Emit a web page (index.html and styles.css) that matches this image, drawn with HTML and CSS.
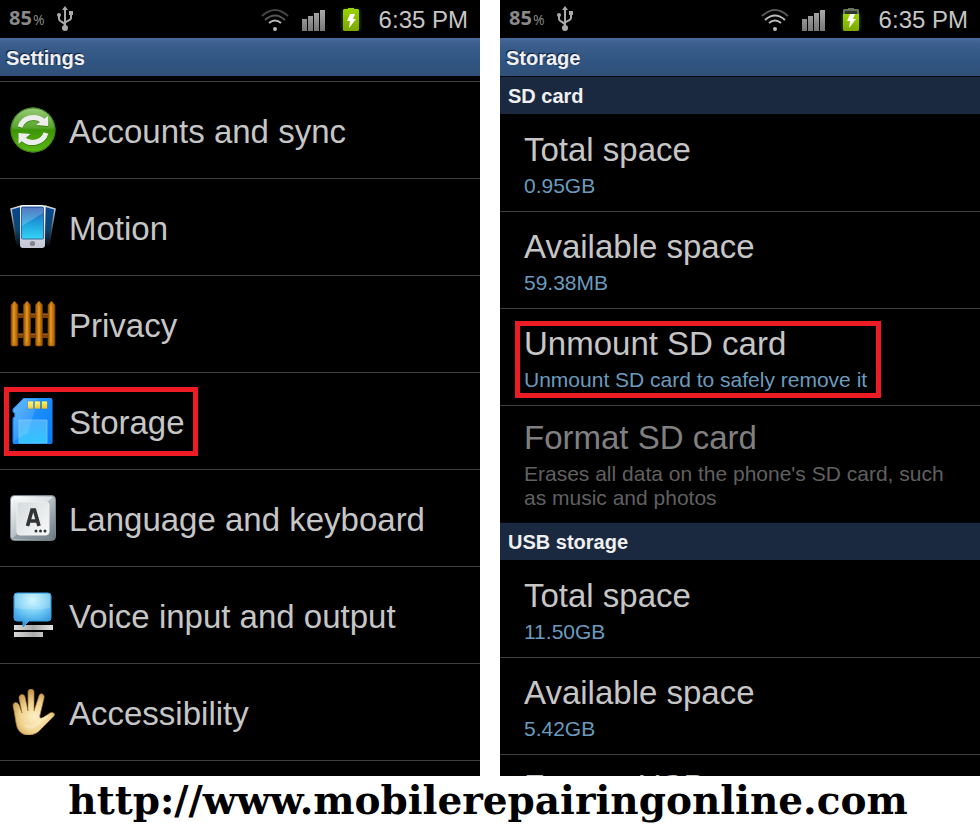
FILE: index.html
```html
<!DOCTYPE html>
<html lang="en">
<head>
<meta charset="utf-8">
<title>Settings and storage</title>
<link rel="stylesheet" href="styles.css">
</head>
<body>
<svg class="defs" aria-hidden="true">
  <defs>
    <linearGradient id="green" x1="0" y1="0" x2="0" y2="1"><stop offset="0" stop-color="#9ccb7c"/><stop offset=".45" stop-color="#57a52a"/><stop offset=".5" stop-color="#3c9405"/><stop offset="1" stop-color="#5cba14"/></linearGradient>
    <linearGradient id="screen" x1="0" y1="0" x2="0" y2="1"><stop offset="0" stop-color="#2d55b4"/><stop offset=".5" stop-color="#1c9fdc"/><stop offset="1" stop-color="#35d4f6"/></linearGradient>
    <linearGradient id="back" x1="0" y1="0" x2="0" y2="1"><stop offset="0" stop-color="#0a4690"/><stop offset=".6" stop-color="#084672"/><stop offset="1" stop-color="#05101c"/></linearGradient>
    <linearGradient id="rim" x1="0" y1="0" x2="0" y2="1"><stop offset="0" stop-color="#d8dce2"/><stop offset=".6" stop-color="#4a4d52"/><stop offset="1" stop-color="#08090a"/></linearGradient>
    <linearGradient id="shell" x1="0" y1="0" x2="0" y2="1"><stop offset="0" stop-color="#fff"/><stop offset="1" stop-color="#c3c6d4"/></linearGradient>
    <linearGradient id="wood" x1="0" y1="0" x2="1" y2="0"><stop offset="0" stop-color="#995000"/><stop offset=".4" stop-color="#d58a13"/><stop offset=".8" stop-color="#b96a04"/><stop offset="1" stop-color="#7b3d00"/></linearGradient>
    <linearGradient id="card" x1="0" y1="0" x2="1" y2="1"><stop offset="0" stop-color="#55b4ff"/><stop offset=".5" stop-color="#188cff"/><stop offset="1" stop-color="#0879f8"/></linearGradient>
    <linearGradient id="label" x1="0" y1="0" x2="0" y2="1"><stop offset="0" stop-color="#4db0ff"/><stop offset="1" stop-color="#30c5ff"/></linearGradient>
    <linearGradient id="gold" x1="0" y1="0" x2="0" y2="1"><stop offset="0" stop-color="#fff27c"/><stop offset=".5" stop-color="#ffe03c"/><stop offset="1" stop-color="#f5b92c"/></linearGradient>
    <linearGradient id="key" x1="0" y1="0" x2="1" y2="1"><stop offset="0" stop-color="#fff"/><stop offset=".5" stop-color="#b5bfc4"/><stop offset="1" stop-color="#65747c"/></linearGradient>
    <linearGradient id="keytop" x1="0" y1="0" x2="1" y2="1"><stop offset="0" stop-color="#d5dadc"/><stop offset="1" stop-color="#f8fafb"/></linearGradient>
    <radialGradient id="bubble" cx=".5" cy=".2" r=".8"><stop offset="0" stop-color="#c4f5ff"/><stop offset=".5" stop-color="#72ccf4"/><stop offset="1" stop-color="#2c91de"/></radialGradient>
    <linearGradient id="bar" x1="0" y1="0" x2="1" y2="0"><stop offset="0" stop-color="#d9d9d9"/><stop offset=".5" stop-color="#aaa"/><stop offset="1" stop-color="#e2e2e2"/></linearGradient>
    <radialGradient id="palm" gradientUnits="userSpaceOnUse" cx="25" cy="28" r="30"><stop offset="0" stop-color="#fff0c6"/><stop offset=".5" stop-color="#efd390"/><stop offset="1" stop-color="#bb8637"/></radialGradient>
    <linearGradient id="battery" x1="0" y1="0" x2="0" y2="1"><stop offset="0" stop-color="#9bd500"/><stop offset="1" stop-color="#7aa600"/></linearGradient>
    <linearGradient id="signal" x1="0" y1="0" x2="0" y2="1"><stop offset="0" stop-color="#aaa"/><stop offset="1" stop-color="#777"/></linearGradient>
    <filter id="glow" x="-50%" y="-50%" width="200%" height="200%"><feGaussianBlur stdDeviation="2"/></filter>
  </defs>
  <symbol id="usb" viewBox="0 0 18 26">
    <path d="M9 4v17M3 10v3c0 3 6 3 6 6M15 9v3c0 3-6 3-6 5" fill="none" stroke="#aaa" stroke-width="2"/>
    <path d="M9 0l3 4H6z" fill="#aaa"/><circle cx="3" cy="9" r="2" fill="#aaa"/><path d="M13 5h4v4h-4z" fill="#aaa"/><circle cx="9" cy="22" r="3" fill="#aaa"/>
  </symbol>
  <symbol id="bars" viewBox="0 0 24 24">
    <path d="M0 12h5v12H0zM6 9h5v15H6zM12 6h5v18h-5zM18 3h5v21h-5z" fill="url(#signal)"/>
  </symbol>
  <symbol id="arrows" viewBox="0 0 46 46">
    <path d="M10 20A14 13 0 0 1 33 14M36 26A14 13 0 0 1 13 32" fill="none" stroke="currentColor" stroke-width="5"/>
    <path d="M38 9v10l-12-1zM8.500 37V26l12 1z" fill="currentColor"/>
  </symbol>
</svg>

<main class="screens">
  <section class="phone" aria-label="Settings screen">
    <div class="status">
      <span class="level">85<small>%</small></span>
      <svg class="usb" aria-hidden="true"><use href="#usb"/></svg>
      <span class="spacer"></span>
      <svg class="wifi" viewBox="0 0 30 24" aria-hidden="true"><g fill="none" stroke-width="2"><path d="M2 9q13-12 26 0" stroke="#444"/><path d="M5 13q10-9 20 0" stroke="#555"/><path d="M9 16q6-5 12 0" stroke="#bbb"/></g><circle cx="15" cy="22" r="2" fill="#bbb"/></svg>
      <svg class="bars" aria-hidden="true"><use href="#bars"/></svg>
      <svg class="battery" viewBox="0 0 29 24" aria-hidden="true"><path d="M5 3h16v20H5z" fill="#6a9800" filter="url(#glow)" opacity=".7"/><path d="M6 2h4V1h6v1h4l1 1v20l-1 1H6l-1-1V3z" fill="url(#battery)"/><path d="M12 7h5l-2 5h3l-7 9 1-7H9z" fill="#fff"/></svg>
      <time class="clock">6:35 PM</time>
    </div>
    <h1 class="title">Settings</h1>
    <nav class="menu">
      <a class="item" href="#accounts"><span class="entry">
        <svg class="icon" viewBox="0 0 46 46" aria-hidden="true"><circle cx="23" cy="23" r="22.500" fill="url(#green)"/><circle cx="23" cy="23" r="22" fill="none" stroke="#3c7d18"/><use class="arrow-shade" href="#arrows" y="1"/><use class="arrow" href="#arrows"/></svg>
        <span class="name">Accounts and sync</span></span></a>
      <a class="item" href="#motion"><span class="entry">
        <svg class="icon" viewBox="0 0 46 46" aria-hidden="true"><path d="M1 5l10-3v38l-4 1z" fill="url(#back)" stroke="url(#rim)" stroke-width="1.500"/><path d="M45 5L35 2v38l4 1z" fill="url(#back)" stroke="url(#rim)" stroke-width="1.500"/><rect x="10" y="1" width="25" height="43" rx="3" fill="url(#shell)"/><rect x="11.500" y="3" width="22" height="32" rx="1" fill="url(#screen)" stroke="#356798"/><path d="M12 22L33 9v-5H12z" fill="#fff" opacity=".2"/><circle cx="22.500" cy="39.500" r="2.600" fill="#85858b"/></svg>
        <span class="name">Motion</span></span></a>
      <a class="item" href="#privacy"><span class="entry">
        <svg class="icon" viewBox="0 0 46 46" aria-hidden="true"><path d="M4 13h38v4H4zM4 33h38v4H4z" fill="#794305"/><path d="M4 13h38M4 33h38" stroke="#bc7820"/><g stroke="#7f4300" stroke-width=".7"><path d="M1 4l3.500-4L8 4v40l-1 1H2l-1-1z" fill="url(#wood)"/><path d="M13.500 4L17 0l3.500 4v40l-1 1h-5l-1-1z" fill="url(#wood)"/><path d="M25.500 4L29 0l3.500 4v40l-1 1h-5l-1-1z" fill="url(#wood)"/><path d="M38 4l3.500-4L45 4v40l-1 1h-5l-1-1z" fill="url(#wood)"/></g><path d="M4 5v36M17 5v36M29 5v36M41 5v36" stroke="#e5a038" stroke-width="2" opacity=".5"/></svg>
        <span class="name">Privacy</span></span></a>
      <a class="item" href="#storage"><span class="entry marked">
        <svg class="icon" viewBox="0 0 46 46" aria-hidden="true"><path d="M14 0h26q2 0 2 2v42q0 2-2 2H5q-2 0-2-2V20l2-1v-4l-2-1v-3z" fill="url(#card)" stroke="#158bff"/><path d="M17.500 3h6v8h-6zM24.500 3h6v8h-6zM31.500 3h6v8h-6z" fill="url(#gold)" stroke="#0878dd" stroke-width=".6"/><path d="M9 22h28v23H9z" fill="url(#label)" stroke="#76c7ff" stroke-width=".8"/><path d="M4 12L14 1h14L18 35 4 43z" fill="#fff" opacity=".12"/></svg>
        <span class="name">Storage</span></span></a>
      <a class="item" href="#language"><span class="entry">
        <svg class="icon" viewBox="0 0 46 46" aria-hidden="true"><rect x=".5" y=".5" width="45" height="45" rx="4" fill="url(#key)" stroke="#7c8589"/><path d="M2 44l6-6h30l6 6z" fill="#7d8b92" opacity=".6"/><path d="M2 2l6 5h29l6-5z" fill="#fff" opacity=".5"/><rect x="7" y="7" width="32" height="33" rx="3" fill="url(#keytop)" stroke="#eee"/><path d="M17.500 31L22 15h2.500L29 31M20 26h7" fill="none" stroke="#333" stroke-width="3.600"/><g fill="#333"><circle cx="26" cy="36" r="1.500"/><circle cx="30.500" cy="36" r="1.500"/><circle cx="35" cy="36" r="1.500"/></g></svg>
        <span class="name">Language and keyboard</span></span></a>
      <a class="item" href="#voice"><span class="entry">
        <svg class="icon" viewBox="0 0 46 46" aria-hidden="true"><path d="M4 33h39v5H4zM4 40h29v5H4z" fill="url(#bar)"/><path d="M7 1h31q3 0 3 3v22q0 3-3 3H19l-6 6v-6H7q-3 0-3-3V4q0-3 3-3z" fill="url(#bubble)" stroke="#3ca2e1"/><path d="M5 4q0-2 2-2h31q2 0 2 2v12q-17 3-35 0z" fill="#fff" opacity=".2"/></svg>
        <span class="name">Voice input and output</span></span></a>
      <a class="item" href="#accessibility"><span class="entry">
        <svg class="icon" viewBox="0 0 46 46" aria-hidden="true"><path d="M7 38C5 31 5 24 3 17c0-4 4-5 6-1l3 8-3-15c0-4 5-5 6-1l3 14V3c0-4 6-4 6 0v19l5-15c1-4 6-2 5 2l-4 17c-1 3 1 4 4 2l6-4c4-2 6 2 3 4L31 40c-6 8-20 9-24-2z" fill="url(#palm)" stroke="#ad7b36" stroke-width=".7"/><path d="M15 36q7 6 15-4l8-5" fill="none" stroke="#fff6d9" stroke-width="3" opacity=".35"/></svg>
        <span class="name">Accessibility</span></span></a>
    </nav>
  </section>

  <section class="phone" aria-label="Storage screen">
    <div class="status">
      <span class="level">85<small>%</small></span>
      <svg class="usb" aria-hidden="true"><use href="#usb"/></svg>
      <span class="spacer"></span>
      <svg class="wifi" viewBox="0 0 30 24" aria-hidden="true"><g fill="none" stroke-width="2"><path d="M2 9q13-12 26 0" stroke="#555"/><path d="M5 13q10-9 20 0" stroke="#bbb"/><path d="M9 16q6-5 12 0" stroke="#bbb"/></g><circle cx="15" cy="22" r="2" fill="#bbb"/></svg>
      <svg class="bars" aria-hidden="true"><use href="#bars"/></svg>
      <svg class="battery" viewBox="0 0 29 24" aria-hidden="true"><path d="M5 6h16v17H5z" fill="#6a9800" filter="url(#glow)" opacity=".7"/><path d="M6 2h4V1h6v1h4l1 1v4H5V3z" fill="#69705f"/><path d="M7 4h12v3H7z" fill="#30362a"/><path d="M5 7h16v16l-1 1H6l-1-1z" fill="url(#battery)"/><path d="M12 7h5l-2 5h3l-7 9 1-7H9z" fill="#fff"/></svg>
      <time class="clock">6:35 PM</time>
    </div>
    <h1 class="title">Storage</h1>
    <h2 class="group">SD card</h2>
    <div class="row"><div class="text"><h3>Total space</h3><p>0.95GB</p></div></div>
    <div class="row"><div class="text"><h3>Available space</h3><p>59.38MB</p></div></div>
    <button class="row" type="button"><span class="text framed"><strong>Unmount SD card</strong><span class="note">Unmount SD card to safely remove it</span></span></button>
    <button class="row tall off" type="button" disabled><span class="text"><strong>Format SD card</strong><span class="note">Erases all data on the phone's SD card, such as music and photos</span></span></button>
    <h2 class="group">USB storage</h2>
    <div class="row"><div class="text"><h3>Total space</h3><p>11.50GB</p></div></div>
    <div class="row"><div class="text"><h3>Available space</h3><p>5.42GB</p></div></div>
    <button class="row tall" type="button"><span class="text"><strong>Format USB storage</strong></span></button>
  </section>
</main>
<footer class="credit"><a href="http://www.mobilerepairingonline.com">http://www.mobilerepairingonline.com</a></footer>
</body>
</html>
```
FILE: styles.css
```css
* { box-sizing: border-box; }

body {
  margin: 0;
  height: 100vh;
  display: flex;
  flex-direction: column;
  overflow: hidden;
  background: #fff;
  font-family: "Liberation Sans", Arial, sans-serif;
}

h1, h2, h3, p { margin: 0; }
a { color: inherit; text-decoration: none; }

.defs { position: absolute; width: 0; height: 0; }

.screens {
  flex: 1;
  min-height: 0;
  display: grid;
  grid-template-columns: 1fr 1fr;
  grid-template-rows: 100%;
  gap: 20px;
}

.phone {
  display: flex;
  flex-direction: column;
  overflow: hidden;
  background: #000;
  color: #c6c6c6;
}
.phone > * { flex-shrink: 0; }

.status {
  display: flex;
  align-items: center;
  gap: 12px;
  height: 38px;
  padding: 0 12px 0 9px;
}
.level {
  font: bold 20px/24px "Open Sans", sans-serif;
  color: #8a8a8a;
}
.level small { margin-left: 1px; font-size: 14px; font-weight: 400; }
.spacer { flex: 1; }
.usb { width: 18px; height: 26px; }
.wifi { width: 30px; height: 24px; }
.bars { width: 24px; height: 24px; }
.battery { width: 29px; height: 24px; }
.clock { padding-top: 1px; font-size: 24px; line-height: 28px; }

.title {
  height: 38px;
  padding: 0 6px;
  background: linear-gradient(#47699b, #3a5d8c 20%, #315583 60%, #2f5077);
  color: #f0f0f0;
  font-size: 20px;
  line-height: 40px;
  text-shadow: -1px -1px 1px #101c30;
}

.menu { padding-top: 5px; }
.item {
  display: flex;
  align-items: center;
  height: 97px;
  padding-left: 4px;
  border-top: 1px solid #3f3f3f;
  font-size: 33px;
  line-height: 38px;
}
.item:last-child { height: 98px; border-bottom: 1px solid #3f3f3f; }
.entry {
  display: flex;
  align-items: center;
  gap: 13px;
  height: 69px;
  padding: 0 8px 0 1px;
  border: 5px solid transparent;
  white-space: nowrap;
}
.marked { border-color: #ed1c24; }
.name { padding-top: 4px; }
.icon { flex: none; width: 46px; height: 46px; }
.arrow { color: #ededed; }
.arrow-shade { color: #2b6f0a; opacity: .6; }

.group {
  height: 38px;
  margin-bottom: 1px;
  padding: 0 8px;
  border-top: 1px solid #05090f;
  background: #1a2940;
  color: #f0f0f0;
  font-size: 20px;
  line-height: 38px;
}

.row {
  display: block;
  width: 100%;
  margin: 0;
  padding: 16px 24px 13px;
  border: 0;
  border-bottom: 1px solid #3f3f3f;
  background: none;
  color: inherit;
  font: inherit;
  text-align: left;
}
.tall { padding-top: 13px; padding-bottom: 12px; border-bottom: 0; }

.text { display: grid; gap: 5px; }
.text h3, .text strong { font-size: 33px; font-weight: 400; line-height: 38px; }
.text p, .note { color: #6a9bbe; font-size: 21px; line-height: 24px; }
.off .text { color: #808080; }
.off .note { color: #606060; }

.framed { position: relative; width: fit-content; }
.framed::after {
  content: "";
  position: absolute;
  inset: -4px -14px -6px -9px;
  border: 5px solid #ed1c24;
}

.credit {
  height: 51px;
  padding-right: 4px;
  text-align: center;
  color: #000;
  font: bold 39px/48px "DejaVu Serif", serif;
}
```
